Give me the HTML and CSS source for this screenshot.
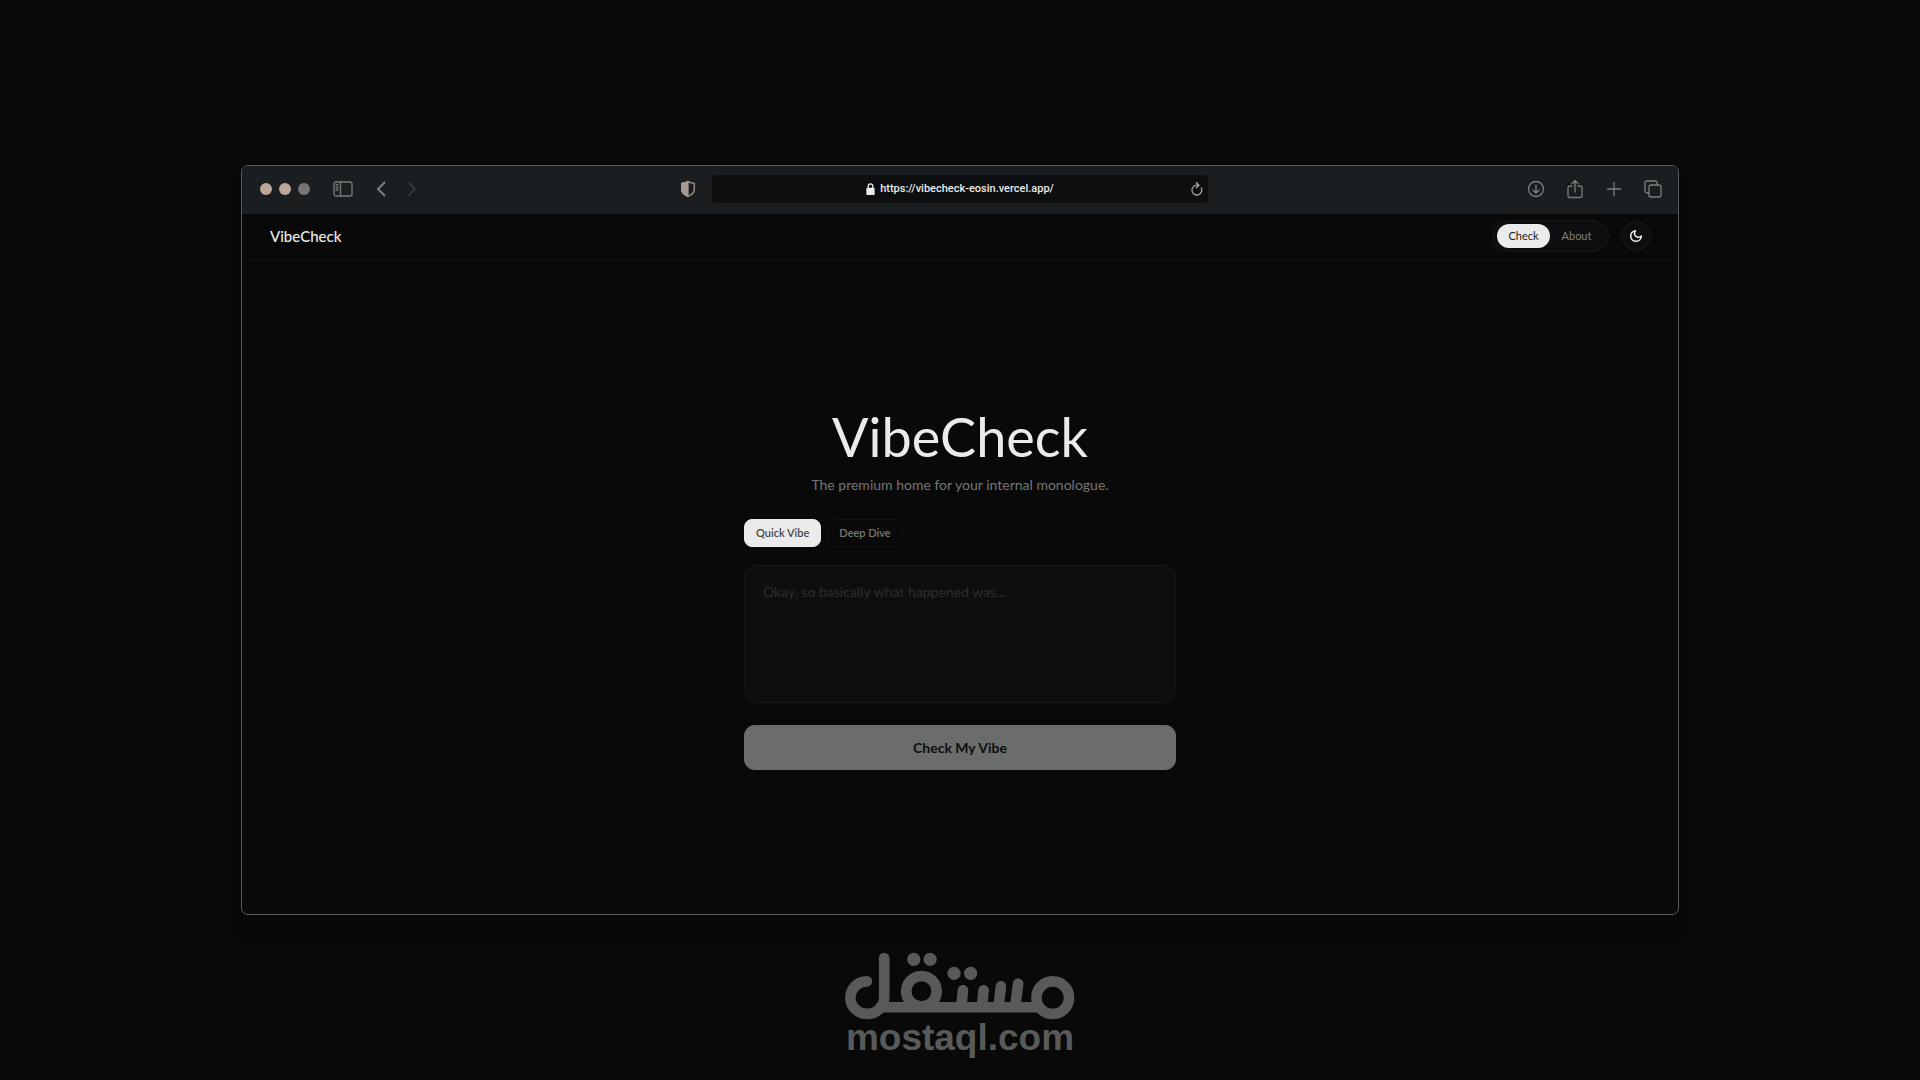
FILE: index.html
```html
<!DOCTYPE html>
<html lang="en">

<head>
    <meta charset="UTF-8">
    <meta name="viewport" content="width=device-width, initial-scale=1.0">
    <title>VibeCheck</title>
    <link rel="stylesheet" href="styles.css">
</head>

<body>
    <div class="window">
        <div class="toolbar">
            <div class="tools tools-left">
                <div class="lights">
                    <span class="light"></span>
                    <span class="light"></span>
                    <span class="light light-off"></span>
                </div>
                <button class="tool" aria-label="Sidebar">
                    <svg width="20" height="16" viewBox="0 0 20 16"><rect x="1" y="1" width="18" height="14" rx="2"/><path d="M7.5 1v14M3 4h2M3 6.5h2M3 9h2"/></svg>
                </button>
                <div class="history">
                    <button class="tool" aria-label="Back">
                        <svg width="10" height="16" viewBox="0 0 10 16"><path class="thick" d="M8.500 1.500L2 8l6.500 6.500"/></svg>
                    </button>
                    <button class="tool faint" aria-label="Forward">
                        <svg width="10" height="16" viewBox="0 0 10 16"><path d="M2 2l6 6-6 6"/></svg>
                    </button>
                </div>
                <button class="tool shield" aria-label="Privacy report">
                    <svg width="16" height="18" viewBox="0 0 16 18"><path d="M8 1.500C6 2.700 4 3 1.700 3.300V9c0 3.500 2.500 6 6.300 7.500 3.800-1.500 6.300-4 6.300-7.500V3.300C12 3 10 2.700 8 1.500z"/><path class="fill" d="M8 1.500C6 2.700 4 3 1.700 3.300V9c0 3.500 2.500 6 6.300 7.500z"/></svg>
                </button>
            </div>
            <div class="address">
                <svg class="lock" width="9" height="12" viewBox="0 0 9 12"><rect class="fill" x="1" y="5.500" width="7" height="6" rx="0.500"/><path d="M2.200 5.500V3.200a2.300 2.300 0 0 1 4.600 0v2.300"/></svg>
                <span>https://vibecheck-eosin.vercel.app/</span>
                <button class="tool reload" aria-label="Reload">
                    <svg width="12" height="14" viewBox="0 0 12 14"><path d="M10.300 6A4.900 4.900 0 1 1 6 3.200h1.500M5.300 0.700l2.600 2.500-2.600 2.500"/></svg>
                </button>
            </div>
            <div class="tools tools-right">
                <button class="tool" aria-label="Downloads">
                    <svg width="18" height="18" viewBox="0 0 18 18"><circle cx="9" cy="9" r="7.500"/><path d="M9 5v8M6 10l3 3 3-3"/></svg>
                </button>
                <button class="tool" aria-label="Share">
                    <svg width="18" height="20" viewBox="0 0 18 20"><path d="M6 7H4a2 2 0 0 0-2 2v7.500a2 2 0 0 0 2 2h10a2 2 0 0 0 2-2V9a2 2 0 0 0-2-2h-2M9 13V2M6 4.500L9 1.500l3 3"/></svg>
                </button>
                <button class="tool" aria-label="New tab">
                    <svg width="18" height="18" viewBox="0 0 18 18"><path d="M9 2.500v13M2.500 9h13"/></svg>
                </button>
                <button class="tool" aria-label="Tab overview">
                    <svg width="18" height="18" viewBox="0 0 18 18"><rect x="5" y="5" width="12" height="12" rx="2"/><path d="M5 13H3a2 2 0 0 1-2-2V3a2 2 0 0 1 2-2h8a2 2 0 0 1 2 2v2"/></svg>
                </button>
            </div>
        </div>

        <header class="navbar">
            <a class="brand" href="#">VibeCheck</a>
            <nav class="nav">
                <div class="links">
                    <a class="link active" href="#">Check</a>
                    <a class="link" href="#">About</a>
                </div>
                <button class="theme" aria-label="Toggle theme">
                    <svg width="14" height="14" viewBox="0 0 14 14"><path d="M6.500 1.700a3.800 3.800 0 0 0 5.800 5.300A5.300 5.300 0 1 1 6.500 1.700z"/></svg>
                </button>
            </nav>
        </header>

        <main class="main">
            <h1>VibeCheck</h1>
            <p class="tagline">The premium home for your internal monologue.</p>
            <form class="form">
                <div class="tabs">
                    <button type="button" class="tab active">Quick Vibe</button>
                    <button type="button" class="tab">Deep Dive</button>
                </div>
                <textarea class="entry" aria-label="Your thoughts" placeholder="Okay, so basically what happened was..."></textarea>
                <button type="button" class="submit">Check My Vibe</button>
            </form>
        </main>
    </div>

    <footer class="credit">
        <svg class="mark" width="230" height="68" viewBox="44 36 692 204" role="img" aria-label="مستقل">
            <path d="M162 54V173A51 49 0 0 1 60 173A50 50 0 0 1 110 124"/>
            <path d="M150 202H622"/>
            <circle cx="274" cy="154" r="46"/>
            <path d="M399 151L394 200M461 151L456 200M513 139L506 200M565 131L556 200"/>
            <circle cx="669" cy="173" r="49"/>
            <g class="dots">
                <circle cx="251" cy="58" r="20"/>
                <circle cx="300" cy="58" r="20"/>
                <circle cx="372" cy="100" r="20"/>
                <circle cx="422" cy="100" r="20"/>
            </g>
        </svg>
        <span class="domain">mostaql.com</span>
    </footer>
</body>

</html>
```

FILE: styles.css
```css
* {
    box-sizing: border-box;
    margin: 0;
    padding: 0;
}

body {
    min-height: 100vh;
    padding-top: 165px;
    background: #090909;
    color: #ebebeb;
    font-family: Lato, "Open Sans", sans-serif;
}

button,
textarea {
    font-family: inherit;
    color: inherit;
    border: 0;
    background: none;
}

a {
    color: inherit;
    text-decoration: none;
}

svg {
    display: block;
    fill: none;
    stroke: currentColor;
    stroke-width: 1.3;
    stroke-linecap: round;
    stroke-linejoin: round;
}

.window {
    display: flex;
    flex-direction: column;
    width: 90%;
    max-width: 1438px;
    min-height: 750px;
    margin: 0 auto;
    border: 1px solid #5b5d5d;
    border-radius: 7px;
    background: #090909;
    box-shadow: 0 16px 10px #070808;
    overflow: hidden;
}

/* browser toolbar */
.toolbar {
    display: grid;
    grid-template-columns: 1fr 496px 1fr;
    align-items: center;
    height: 48px;
    padding: 0 16px 2px;
    background: #1a1e20;
    color: #7c7d7d;
}

.tools {
    display: flex;
    align-items: center;
}

.tools-left {
    gap: 23px;
}

.tools-right {
    justify-content: flex-end;
    gap: 21px;
}

.lights {
    display: flex;
    gap: 7px;
    padding-left: 2px;
}

.light {
    width: 12px;
    height: 12px;
    border-radius: 50%;
    background: #bca697;
}

.light-off {
    background: #777675;
}

.history {
    display: flex;
    gap: 21px;
}

.thick {
    stroke-width: 2;
}

.faint {
    color: #3f4243;
}

.fill {
    fill: currentColor;
}

.shield {
    margin-left: auto;
    margin-right: 16px;
    color: #a59a91;
}

.address {
    position: relative;
    display: flex;
    justify-content: center;
    align-items: center;
    gap: 5px;
    height: 28px;
    border-radius: 4px;
    background: #0c0e10;
    color: #ebebeb;
    font: 500 11px/28px Roboto, sans-serif;
}

.reload {
    position: absolute;
    right: 5px;
    color: #a5a5a5;
}

/* site header */
.navbar {
    display: flex;
    justify-content: space-between;
    align-items: center;
    height: 46px;
    padding: 0 27px 2px 28px;
    border-bottom: 1px solid #111313;
}

.brand {
    font-size: 15px;
    font-weight: 500;
}

.nav {
    display: flex;
    align-items: center;
    gap: 12px;
}

.links {
    display: flex;
    padding: 3px 5px 3px 4px;
    border: 1px solid #15191b;
    border-radius: 16px;
    background: #0c0e0f;
}

.link {
    width: 53px;
    border-radius: 12px;
    color: #7f8080;
    font-size: 11px;
    line-height: 24px;
    text-align: center;
}

.link.active {
    background: #ebebeb;
    color: #1a1e20;
}

.theme {
    display: flex;
    justify-content: center;
    align-items: center;
    width: 30px;
    height: 30px;
    border: 1px solid #15191b;
    border-radius: 50%;
    background: #0c0e0f;
    color: #ebebeb;
}

.theme svg {
    stroke-width: 1.6;
}

/* check form */
.main {
    display: flex;
    flex: 1;
    flex-direction: column;
    align-items: center;
    justify-content: center;
    padding-top: 2px;
}

h1 {
    font-size: 54px;
    font-weight: 400;
    line-height: 60px;
}

.tagline {
    margin-top: 6px;
    color: #747676;
    font-size: 14px;
    line-height: 24px;
}

.form {
    display: flex;
    flex-direction: column;
    width: 90%;
    max-width: 432px;
    margin-top: 22px;
}

.tabs {
    display: flex;
    gap: 6px;
    margin-bottom: 18px;
}

.tab {
    height: 28px;
    padding: 0 11px;
    border: 1px solid #101214;
    border-radius: 8px;
    color: #777979;
    font-size: 11px;
    font-weight: 600;
}

.tab.active {
    border-color: #ebebeb;
    background: #ebebeb;
    color: #4b4744;
}

.entry {
    height: 138px;
    padding: 16px 18px;
    border: 1px solid #14181a;
    border-radius: 12px;
    background: #0c0e10;
    color: #ebebeb;
    font-size: 14px;
    line-height: 20px;
    resize: none;
}

.entry::placeholder {
    color: #2b2e2f;
}

.submit {
    height: 45px;
    margin-top: 22px;
    border-radius: 11px;
    background: #6b6d6c;
    color: #0c0e10;
    font-size: 14px;
    font-weight: 700;
}

/* footer logo */
.credit {
    display: flex;
    flex-direction: column;
    align-items: center;
    margin-top: 37px;
    color: #585a59;
}

.mark {
    stroke-width: 32;
}

.dots {
    fill: currentColor;
    stroke: none;
}

.domain {
    font: 700 37px/36px "Liberation Sans", Arial, sans-serif;
}
```
